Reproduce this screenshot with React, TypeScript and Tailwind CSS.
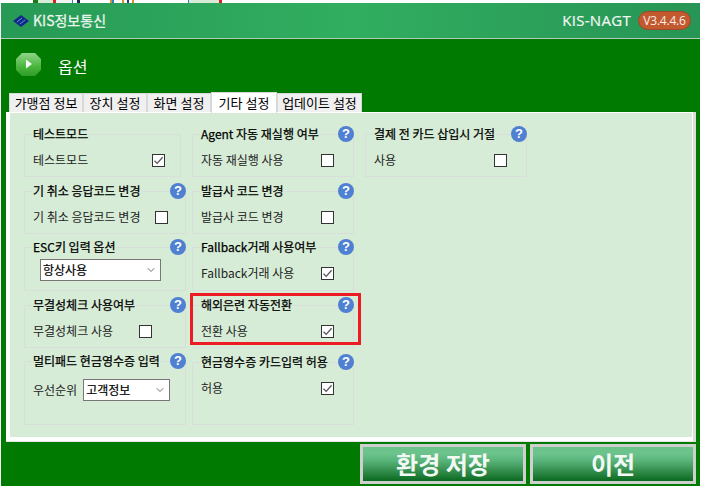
import React from "react";
import { ChevronDown } from "lucide-react";

const fontStack = "font-['Noto_Sans_CJK_KR','Noto_Sans',sans-serif]";

function Help() {
  return (
    <span className="-mr-px ml-auto flex h-4 w-4 shrink-0 items-center justify-center rounded-full bg-[#4f80d2] font-['Liberation_Sans',sans-serif] text-[13px] font-bold text-white">
      ?
    </span>
  );
}

function Check({ checked, right }: { checked?: boolean; right: string }) {
  return (
    <span className={`${right} ml-auto flex h-[13px] w-[13px] shrink-0 items-center justify-center border border-[#333] bg-white`}>
      {checked && (
        <svg width="11" height="11" viewBox="0 0 11 11" fill="none" stroke="#555" strokeWidth="1.3">
          <path d="M1.5 5.8L4.2 8.4L9.6 2.2" />
        </svg>
      )}
    </span>
  );
}

function Select({ value, width }: { value: string; width: string }) {
  return (
    <div className={`${width} flex h-[22px] items-center justify-between border border-[#777] bg-white pl-[2px] pr-[3px] text-[12px] text-black`}>
      <span className="-mt-[1px] [-webkit-text-stroke:0.2px_black]">{value}</span>
      <ChevronDown size={12} strokeWidth={1.4} color="#333" />
    </div>
  );
}

function Group({
  title,
  help,
  className,
  children,
}: {
  title: string;
  help?: boolean;
  className: string;
  children: React.ReactNode;
}) {
  return (
    <div className={`${className} border border-[#d9dedb]`}>
      <div className="-mt-[10px] flex h-[18px] items-center pl-[7px]">
        <span className="bg-[#d6ecd6] px-px text-[12px] leading-[18px] text-black [-webkit-text-stroke:0.25px_black]">{title}</span>
        {help && <Help />}
      </div>
      {children}
    </div>
  );
}

function Row({ label, children }: { label: string; children: React.ReactNode }) {
  return (
    <div className="mt-[9px] flex h-[16px] items-center pl-2 text-[12px] text-[#222]">
      <span>{label}</span>
      {children}
    </div>
  );
}

const tabs = [
  { label: "가맹점 정보", w: "w-[74px]" },
  { label: "장치 설정", w: "w-[64px]" },
  { label: "화면 설정", w: "w-[64px]" },
  { label: "기타 설정", w: "w-[66px]", active: true },
  { label: "업데이트 설정", w: "w-[85px]" },
];

export default function App() {
  return (
    <div className={`${fontStack} h-[489px] w-[701px] overflow-hidden bg-white`}>
      {/* top strip of the window behind */}
      <div className="flex h-[3px] items-start pl-[33px]">
        <span className="h-[3px] w-[5px] bg-[#1a7a1a]" />
        <span className="h-[3px] w-[15px] bg-[#d6ecd6]" />
        <span className="h-[3px] w-[3px] bg-[#e02020]" />
        <span className="h-[3px] w-[16px] bg-[#f4f4f4]" />
        <span className="h-[3px] w-px bg-[#2a7ad0]" />
        <span className="h-[3px] w-[4px] bg-white" />
        <span className="h-[3px] w-[3px] bg-[#20205a]" />
        <span className="h-[3px] w-[30px] bg-white" />
        <span className="h-[3px] w-[2px] bg-[#e08a30]" />
        <span className="h-[3px] w-[2px] bg-[#2a7ad0]" />
        <span className="h-[3px] w-[8px] bg-white" />
        <span className="h-[3px] w-[2px] bg-[#e08a30]" />
        <span className="h-[3px] w-[3px] bg-white" />
        <span className="h-[3px] w-[2px] bg-[#2a3a80]" />
        <span className="h-[3px] w-[3px] bg-white" />
        <span className="h-[3px] w-[2px] bg-[#e08a30]" />
        <span className="h-[3px] w-[54px] bg-white" />
        <span className="h-[3px] w-px bg-[#2a7ad0]" />
        <span className="h-[3px] w-[30px] bg-[#d6ecd6]" />
        <span className="h-[3px] w-[3px] bg-[#e02020]" />
      </div>

      <div className="ml-px flex h-[483px] w-[699px] flex-col bg-[#007a00]">
        {/* header */}
        <div className="flex h-[36px] shrink-0 items-center border-b border-[#b5c9ba] bg-gradient-to-r from-[#279a55] via-[#31ae60] to-[#279555] pl-3 pr-[9px]">
          <svg width="16" height="12" viewBox="0 0 16 12" className="mr-[4px]">
            <path d="M8 0L16 6L8 12L0 6Z" fill="#12288a" />
            <path d="M4 7L9 3M7 9L12 5" stroke="#5c9ad8" strokeWidth="1" />
          </svg>
          <span className="text-[14px] text-[#e8f5ec] [-webkit-text-stroke:0.3px_#e8f5ec]">KIS정보통신</span>
          <span className="ml-auto mr-[7px] font-['Open_Sans',sans-serif] text-[15px] tracking-[0.3px] text-[#f2f7f3] [-webkit-text-stroke:0.2px_#f2f7f3]">KIS-NAGT</span>
          <span className="flex h-[19px] w-[53px] items-center justify-center rounded-full border border-[#9c4a2a] bg-[#c2592f] font-['Open_Sans',sans-serif] text-[12px] tracking-[-0.2px] text-[#fbeee8]">
            V3.4.4.6
          </span>
        </div>

        {/* page title */}
        <div className="flex h-[54px] shrink-0 items-center pl-[15px]">
          <svg width="25" height="23" viewBox="0 0 25 23" className="-mt-[4px]">
            <defs>
              <linearGradient id="play" x1="0" y1="0" x2="0" y2="1">
                <stop offset="0" stopColor="#8fd58a" />
                <stop offset="0.6" stopColor="#49b53c" />
                <stop offset="1" stopColor="#2f9c28" />
              </linearGradient>
            </defs>
            <path d="M6 0H19L25 6V17L19 23H6L0 17V6Z" fill="url(#play)" />
            <path d="M10 6.5L16 11L10 15.5Z" fill="#f4fbf2" />
          </svg>
          <span className="ml-[17px] text-[16px] text-white">옵션</span>
        </div>

        {/* tabs */}
        <div className="flex h-[19px] shrink-0 items-end pl-2">
          {tabs.map((tab) => (
            <div
              key={tab.label}
              className={
                tab.active
                  ? `${tab.w} z-10 -mb-px flex h-[21px] items-center justify-center border border-b-0 border-[#d8d8d8] bg-white text-[13px] text-black`
                  : `${tab.w} flex h-[19px] items-center justify-center border border-b-0 border-[#d8d8d8] bg-[#f0f0f0] text-[13px] text-black`
              }
            >
              {tab.label}
            </div>
          ))}
        </div>

        {/* panel */}
        <div className="ml-[5px] h-[330px] w-[690px] shrink-0 border-b-[1px] border-r-[3px] border-b-[#e4e4e4] border-r-[#dcdcdc] bg-white pb-[4px] pl-1 pr-0 pt-px">
          <div className="relative flex h-[324px] w-[682px] bg-[#d6ecd6] pl-[14px]">
            {/* first column */}
            <div className="w-[162px]">
              <Group title="테스트모드" className="mt-[21px] h-[43px] w-[157px]">
                <Row label="테스트모드">
                  <Check checked right="mr-[15px]" />
                </Row>
              </Group>
              <Group title="기 취소 응답코드 변경" help className="mt-[14px] h-[43px] w-[162px]">
                <Row label="기 취소 응답코드 변경">
                  <Check right="mr-[17px]" />
                </Row>
              </Group>
              <Group title="ESC키 입력 옵션" help className="mt-[13px] h-[44px] w-[162px]">
                <div className="mt-[3px] pl-[15px]">
                  <Select value="항상사용" width="w-[121px]" />
                </div>
              </Group>
              <Group title="무결성체크 사용여부" help className="mt-[14px] h-[43px] w-[162px]">
                <Row label="무결성체크 사용">
                  <Check right="mr-[33px]" />
                </Row>
              </Group>
              <Group title="멀티패드 현금영수증 입력" help className="mt-[13px] h-[64px] w-[162px]">
                <div className="mt-[9px] flex items-center pl-2 text-[12px] text-[#222]">
                  <span className="mr-[6px]">우선순위</span>
                  <Select value="고객정보" width="w-[87px]" />
                </div>
              </Group>
            </div>

            {/* second column */}
            <div className="ml-[6px] w-[162px]">
              <Group title="Agent 자동 재실행 여부" help className="mt-[21px] h-[43px] w-[162px]">
                <Row label="자동 재실행 사용">
                  <Check right="mr-[19px]" />
                </Row>
              </Group>
              <Group title="발급사 코드 변경" help className="mt-[14px] h-[43px] w-[162px]">
                <Row label="발급사 코드 변경">
                  <Check right="mr-[19px]" />
                </Row>
              </Group>
              <Group title="Fallback거래 사용여부" help className="mt-[13px] h-[44px] w-[162px]">
                <Row label="Fallback거래 사용">
                  <Check checked right="mr-[19px]" />
                </Row>
              </Group>
              <Group title="해외은련 자동전환" help className="mt-[14px] h-[43px] w-[162px]">
                <Row label="전환 사용">
                  <Check checked right="mr-[19px]" />
                </Row>
              </Group>
              <Group title="현금영수증 카드입력 허용" help className="mt-[14px] h-[63px] w-[162px]">
                <Row label="허용">
                  <Check checked right="mr-[19px]" />
                </Row>
              </Group>
            </div>

            {/* third column */}
            <div className="ml-[11px] w-[162px]">
              <Group title="결제 전 카드 삽입시 거절" help className="mt-[21px] h-[43px] w-[162px]">
                <Row label="사용">
                  <Check right="mr-[19px]" />
                </Row>
              </Group>
            </div>

            {/* highlight around the overseas card group */}
            <div className="pointer-events-none absolute left-[180px] top-[180px] h-[52px] w-[171px] border-[3px] border-[#ed1c24]" />
          </div>
        </div>

        {/* footer buttons */}
        <div className="mt-[2px] flex justify-end gap-[4px] pr-[4px]">
          {["환경 저장", "이전"].map((label) => (
            <button
              key={label}
              className="flex h-[40px] w-[166px] items-center justify-center border-[3px] border-[#cfcfcf] bg-gradient-to-b from-[#6cc48c] from-20% via-[#58b47a] via-40% to-[#056a1e] text-[24px] font-bold text-[#f2f8f3]"
            >
              {label}
            </button>
          ))}
        </div>
      </div>
    </div>
  );
}
